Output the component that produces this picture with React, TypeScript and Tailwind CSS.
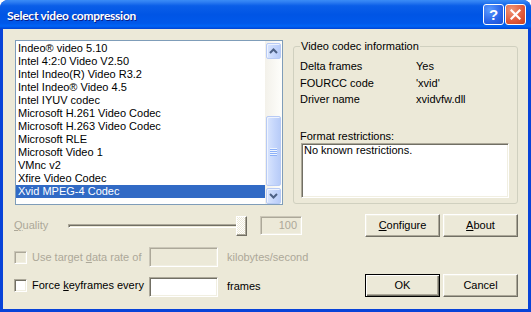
import React from "react";

const items = [
  "Indeo® video 5.10",
  "Intel 4:2:0 Video V2.50",
  "Intel Indeo(R) Video R3.2",
  "Intel Indeo® Video 4.5",
  "Intel IYUV codec",
  "Microsoft H.261 Video Codec",
  "Microsoft H.263 Video Codec",
  "Microsoft RLE",
  "Microsoft Video 1",
  "VMnc v2",
  "Xfire Video Codec",
  "Xvid MPEG-4 Codec",
];

function Chevron({ up }: { up: boolean }) {
  return (
    <svg width="9" height="6" viewBox="0 0 9 6">
      <path
        d={up ? "M1 5 L4.5 1.5 L8 5" : "M1 1 L4.5 4.5 L8 1"}
        fill="none"
        stroke="#4D6185"
        strokeWidth="2"
      />
    </svg>
  );
}

function ScrollBtn({ up }: { up: boolean }) {
  return (
    <div className="h-[16px] w-[15px] rounded-[2px] border border-[#B7CAF5] bg-[linear-gradient(to_right,#D9E5FD,#C4D5FB_60%,#B8CCF8)] flex items-center justify-center shadow-[inset_1px_1px_0_#EEF3FE]">
      <Chevron up={up} />
    </div>
  );
}

function Sunken({ className = "", children }: { className?: string; children?: React.ReactNode }) {
  return (
    <div
      className={
        "border border-t-[#ACA899] border-l-[#ACA899] border-b-white border-r-white shadow-[inset_1px_1px_0_#716F64,inset_-1px_-1px_0_#F1EFE2] " +
        className
      }
    >
      {children}
    </div>
  );
}

function DisabledBox({ className = "", children }: { className?: string; children?: React.ReactNode }) {
  return (
    <div
      className={
        "border border-t-[#CBC7B8] border-l-[#CBC7B8] border-b-white border-r-white shadow-[inset_1px_1px_0_#ACA899,inset_-1px_-1px_0_#F1EFE2] bg-[#ECE9D8] " +
        className
      }
    >
      {children}
    </div>
  );
}

function Btn({ children, def = false }: { children: React.ReactNode; def?: boolean }) {
  return (
    <div
      className={
        "w-[75px] h-[23px] bg-[#ECE9D8] flex items-center justify-center text-black " +
        (def
          ? "border border-black shadow-[inset_1px_1px_0_#FFFFFF,inset_-1px_-1px_0_#716F64,inset_-2px_-2px_0_#ACA899]"
          : "border border-t-white border-l-white border-b-[#716F64] border-r-[#716F64] shadow-[inset_-1px_-1px_0_#ACA899,inset_1px_1px_0_#F1EFE2]")
      }
    >
      {children}
    </div>
  );
}

export default function App() {
  return (
    <div
      className="w-[531px] h-[312px] flex flex-col rounded-t-[8px] overflow-hidden bg-[#0843D8] text-[11px] text-black"
      style={{ fontFamily: '"Liberation Sans", Arial, sans-serif' }}
    >
      {/* Title bar */}
      <div className="h-[29px] shrink-0 flex items-center pl-[7px] pr-[5px] bg-[linear-gradient(to_bottom,#3A8CF6_0%,#2E7EF2_7%,#0A5EE8_20%,#0055E5_50%,#0058EA_80%,#0064F6_90%,#0043D4_100%)]">
        <div
          className="flex-1 text-white font-bold text-[12px] pt-[2px] tracking-[-0.25px] [text-shadow:1px_1px_0_#0A1E8A]"
          style={{ fontFamily: 'Lato, "Liberation Sans", Arial, sans-serif' }}
        >
          Select video compression
        </div>
        <div className="flex gap-[1px]">
          <div className="w-[21px] h-[21px] rounded-[3px] border border-white bg-[radial-gradient(circle_at_30%_25%,#5B9BFF,#2A64E8_60%,#1C4FD2)] flex items-center justify-center text-white font-bold text-[15px] leading-none">
            ?
          </div>
          <div className="w-[21px] h-[21px] rounded-[3px] border border-white bg-[radial-gradient(circle_at_30%_25%,#F09677,#E0583A_60%,#C8401E)] flex items-center justify-center">
            <svg width="11" height="11" viewBox="0 0 11 11">
              <path d="M1.5 1.5 L9.5 9.5 M9.5 1.5 L1.5 9.5" stroke="white" strokeWidth="2.2" strokeLinecap="square" />
            </svg>
          </div>
        </div>
      </div>

      {/* Body */}
      <div className="flex-1 mx-[3px] mb-[3px] bg-[#ECE9D8] flex flex-col pl-[11px] pr-[10px] pt-[11px]">
        {/* Top row */}
        <div className="flex h-[165px]">
          {/* Listbox */}
          <div className="ml-[1px] w-[268px] h-[165px] border border-[#7F9DB9] bg-white flex">
            <div className="flex-1 pt-[1px]">
              {items.map((it, i) => (
                <div
                  key={it}
                  className={
                    "h-[13px] leading-[13px] pl-[2px] whitespace-nowrap " +
                    (i === items.length - 1 ? "bg-[#316AC5] text-white" : "")
                  }
                >
                  {it}
                </div>
              ))}
            </div>
            <div className="w-[17px] flex flex-col pt-[2px] pl-[1px] bg-[linear-gradient(to_right,#F3F1EA,#FEFEFB)]">
              <ScrollBtn up />
              <div className="h-[57px]" />
              <div className="h-[70px] w-[15px] rounded-[2px] border border-[#B7CAF5] bg-[linear-gradient(to_right,#D9E5FD,#C4D5FB_60%,#B8CCF8)] shadow-[inset_1px_1px_0_#EEF3FE] flex flex-col items-center justify-center gap-[1px]">
                {[0, 1, 2, 3].map((k) => (
                  <div key={k} className="w-[7px] h-[1px] bg-[#EEF4FE] shadow-[0_1px_0_#8CB0F8]" />
                ))}
              </div>
              <div className="h-[2px]" />
              <ScrollBtn up={false} />
            </div>
          </div>

          {/* Group box */}
          <fieldset className="ml-[10px] w-[225px] h-[164px] border border-[#D0D0BF] rounded-[3px] flex flex-col">
            <legend className="ml-[6px] px-[1px] leading-[13px] h-[13px]">Video codec information</legend>
            <div className="pt-[5px] pl-[6px]">
              <div className="flex h-[17px] leading-[16px]">
                <div className="w-[116px]">Delta frames</div>
                <div>Yes</div>
              </div>
              <div className="flex h-[16px] leading-[16px]">
                <div className="w-[116px]">FOURCC code</div>
                <div>'xvid'</div>
              </div>
              <div className="flex h-[16px] leading-[16px]">
                <div className="w-[116px]">Driver name</div>
                <div>xvidvfw.dll</div>
              </div>
              <div className="mt-[23px] leading-[13px] h-[13px]">Format restrictions:</div>
              <Sunken className="ml-[1px] w-[208px] h-[55px] bg-white pl-[2px] leading-[12px]">
                No known restrictions.
              </Sunken>
            </div>
          </fieldset>
        </div>

        {/* Row 1: Quality */}
        <div className="mt-[9px] h-[23px] flex items-center">
          <div className="w-[54px] text-[#ACA899]">
            <span className="underline underline-offset-[1px]">Q</span>uality
          </div>
          <div className="relative w-[179px] h-[23px] flex items-center">
            <div className="w-[177px] h-[4px] border-t border-l border-t-[#ACA899] border-l-[#ACA899] border-b border-r border-b-white border-r-white shadow-[inset_1px_1px_0_#716F64]" />
            <div className="absolute left-[168px] top-[2px] w-[11px] h-[20px] border border-t-white border-l-white border-b-[#716F64] border-r-[#716F64] shadow-[inset_-1px_-1px_0_#ACA899] bg-[repeating-conic-gradient(#ffffff_0%_25%,#ECE9D8_0%_50%)] bg-[length:2px_2px]" />
          </div>
          <DisabledBox className="ml-[13px] w-[42px] h-[19px] text-right pr-[4px] leading-[17px] text-[#ACA899]">
            100
          </DisabledBox>
          <div className="ml-auto flex gap-[3px]">
            <Btn>
              <span>
                <span className="underline underline-offset-[1px]">C</span>onfigure
              </span>
            </Btn>
            <Btn>
              <span>
                <span className="underline underline-offset-[1px]">A</span>bout
              </span>
            </Btn>
          </div>
        </div>

        {/* Row 2 */}
        <div className="mt-[10px] h-[20px] flex items-center">
          <DisabledBox className="w-[13px] h-[13px]" />
          <div className="ml-[5px] w-[117px] text-[#ACA899]">
            Use target <span className="underline underline-offset-[1px]">d</span>ata rate of
          </div>
          <DisabledBox className="w-[69px] h-[20px]" />
          <div className="ml-[9px] text-[#ACA899]">kilobytes/second</div>
        </div>

        {/* Row 3 */}
        <div className="mt-[6px] h-[24px] flex items-center">
          <Sunken className="w-[13px] h-[13px] bg-white" />
          <div className="ml-[5px] w-[117px]">
            Force <span className="underline underline-offset-[1px]">k</span>eyframes every
          </div>
          <Sunken className="w-[69px] h-[20px] bg-white mt-[3px]" />
          <div className="ml-[9px] mt-[2px]">frames</div>
          <div className="ml-auto flex gap-[3px]">
            <Btn def>OK</Btn>
            <Btn>Cancel</Btn>
          </div>
        </div>
      </div>
    </div>
  );
}
